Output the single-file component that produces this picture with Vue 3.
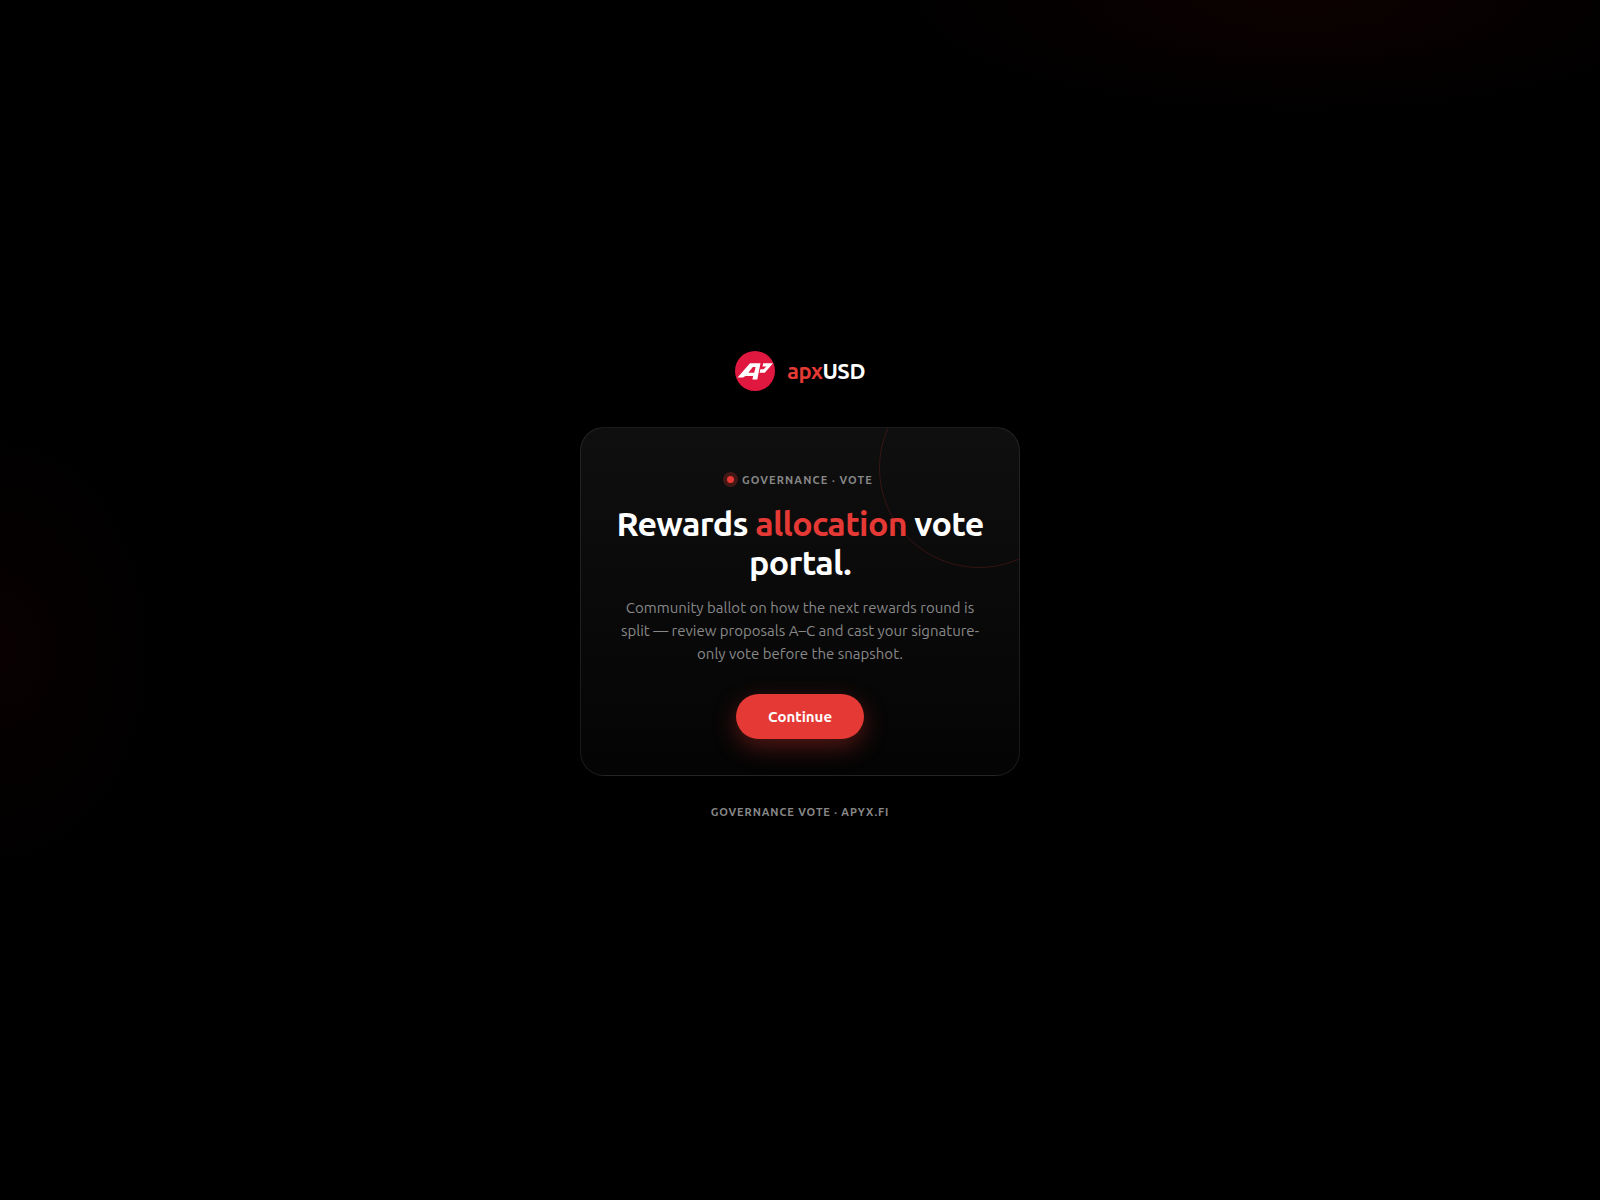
<script setup>
const title = ['Rewards ', 'allocation', ' vote portal.']
</script>

<template>
  <main class="page">
    <div class="brand">
      <svg class="mark" viewBox="0 0 40 40" aria-hidden="true">
        <circle cx="20" cy="20" r="20" fill="#e0173f" />
        <path fill="#fff" fill-rule="evenodd" d="M2.5 26.5 15 12.3H25.5L22.3 28.5H17.4L18.2 25H10.5L8 26.5ZM13.4 21.8 17.8 16H20.6L19.2 21.8Z" />
        <path fill="#fff" d="M28.2 12.3H38L29.8 21.8H24.6L25.4 18.2H28.6L31.4 15.6H27.5Z" />
      </svg>
      <span class="wordmark"><span class="red">apx</span>USD</span>
    </div>

    <section class="card">
      <div class="ring"></div>
      <div class="eyebrow"><span class="dot"></span>GOVERNANCE · VOTE</div>
      <h1>{{ title[0] }}<span class="red">{{ title[1] }}</span>{{ title[2] }}</h1>
      <p>Community ballot on how the next rewards round is split — review proposals A–C and cast your signature-only vote before the snapshot.</p>
      <button type="button">Continue</button>
    </section>

    <footer>GOVERNANCE VOTE · APYX.FI</footer>
  </main>
</template>

<style scoped>
.page {
  box-sizing: border-box;
  min-height: 1200px;
  padding-bottom: 30px;
  display: flex;
  flex-direction: column;
  align-items: center;
  justify-content: center;
  background:
    radial-gradient(ellipse 420px 120px at 1300px 0, rgba(120, 10, 10, 0.1), transparent 100%),
    radial-gradient(ellipse 170px 240px at 0 650px, rgba(120, 10, 10, 0.07), transparent 100%),
    #000;
  font-family: Ubuntu, "Open Sans", "Noto Sans", sans-serif;
  color: #fff;
}
.red { color: #e53935; }
.brand {
  display: flex;
  align-items: center;
  gap: 12px;
  margin-bottom: 36px;
}
.mark { width: 40px; height: 40px; display: block; }
.wordmark { font-size: 22px; font-weight: 700; letter-spacing: -0.44px; }
.card {
  position: relative;
  overflow: hidden;
  box-sizing: border-box;
  width: 440px;
  padding: 44px 32px 36px;
  border: 1px solid rgba(255, 255, 255, 0.09);
  border-radius: 24px;
  background: linear-gradient(180deg, #0f0f0f 0%, #040404 100%);
  text-align: center;
}
.ring {
  position: absolute;
  top: -60px;
  right: -60px;
  width: 200px;
  height: 200px;
  box-sizing: border-box;
  border: 1px solid rgba(229, 57, 53, 0.2);
  border-radius: 50%;
}
.eyebrow {
  position: relative;
  display: flex;
  align-items: center;
  justify-content: center;
  gap: 8px;
  font-size: 11px;
  font-weight: 700;
  letter-spacing: 1.1px;
  line-height: 16px;
  color: #888;
}
.dot {
  width: 7px;
  height: 7px;
  border-radius: 50%;
  background: #e53935;
  box-shadow: 0 0 0 4px rgba(229, 57, 53, 0.25);
}
h1 {
  position: relative;
  margin: 16px 0 0;
  font-size: 34px;
  line-height: 39px;
  font-weight: 700;
  letter-spacing: -0.68px;
}
p {
  position: relative;
  margin: 14px 0 0;
  font-size: 15px;
  line-height: 23.25px;
  font-weight: 400;
  color: #888;
}
button {
  position: relative;
  display: block;
  margin: 29px auto 0;
  width: 128px;
  height: 45px;
  border: 0;
  border-radius: 23px;
  background: #e53935;
  color: #fff;
  font: 700 15px Ubuntu, "Open Sans", "Noto Sans", sans-serif;
  box-shadow: 0 8px 24px rgba(229, 57, 53, 0.35);
}
footer {
  margin-top: 30px;
  font-size: 11px;
  font-weight: 700;
  letter-spacing: 0.88px;
  line-height: 13px;
  color: #888;
}
</style>

<style>
html, body { background: #000; }
</style>
